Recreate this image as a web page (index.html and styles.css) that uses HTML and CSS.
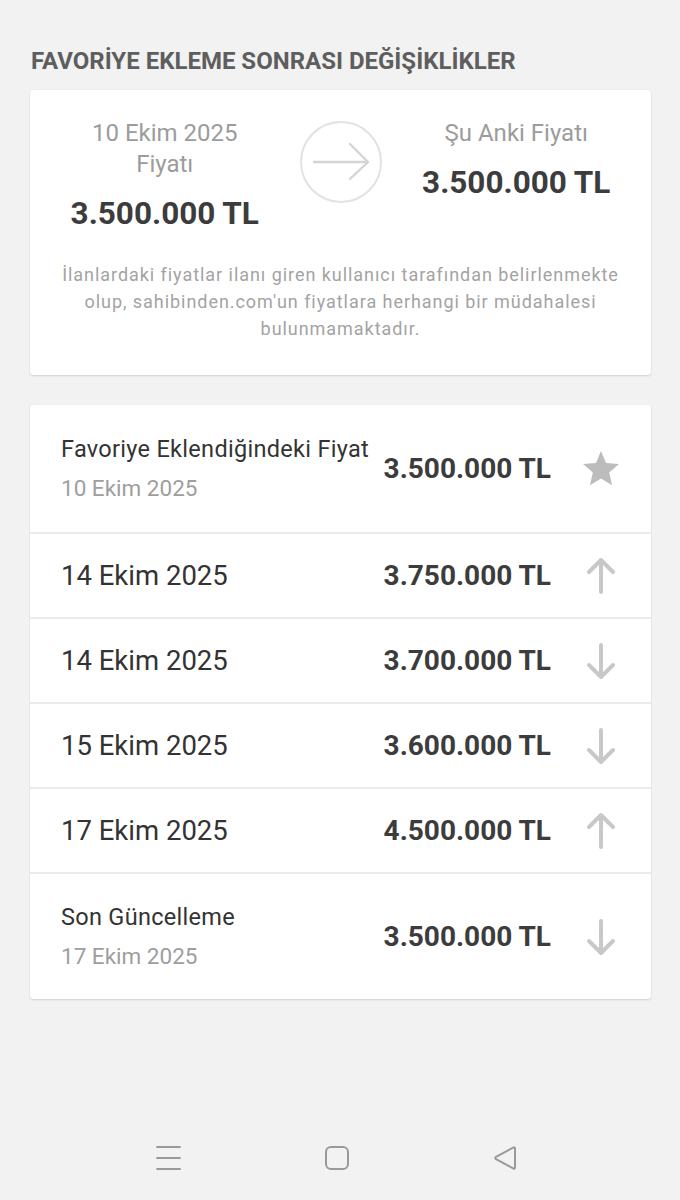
FILE: index.html
```html
<!DOCTYPE html>
<html lang="tr">
<head>
<meta charset="utf-8">
<title>Favoriye Ekleme Sonrası Değişiklikler</title>
<link rel="stylesheet" href="styles.css">
</head>
<body>
<main class="page">
  <h1 class="title">FAVORİYE EKLEME SONRASI DEĞİŞİKLİKLER</h1>

  <section class="card summary">
    <div class="compare">
      <div class="col">
        <div class="col-label">10 Ekim 2025<br>Fiyatı</div>
        <div class="big-price">3.500.000 TL</div>
      </div>
      <div class="circle">
        <svg width="82" height="82" viewBox="0 0 82 82">
          <circle cx="41" cy="41" r="40" fill="none" stroke="#e2e2e2" stroke-width="2"/>
          <path d="M14 41H68M50 23L68 41L50 58" fill="none" stroke="#d4d4d4" stroke-width="2.4" stroke-linecap="round" stroke-linejoin="round"/>
        </svg>
      </div>
      <div class="col">
        <div class="col-label">Şu Anki Fiyatı</div>
        <div class="big-price">3.500.000 TL</div>
      </div>
    </div>
    <p class="disclaimer">İlanlardaki fiyatlar ilanı giren kullanıcı tarafından belirlenmekte olup, sahibinden.com'un fiyatlara herhangi bir müdahalesi bulunmamaktadır.</p>
  </section>

  <section class="card history">
    <div class="row tall">
      <div class="row-text">
        <div class="row-label">Favoriye Eklendiğindeki Fiyat</div>
        <div class="row-date">10 Ekim 2025</div>
      </div>
      <div class="row-price">3.500.000 TL</div>
      <div class="row-icon">
        <svg width="36" height="36" viewBox="2 2 20 20"><path d="M12 17.27L18.18 21l-1.64-7.03L22 9.24l-7.19-.61L12 2 9.19 8.63 2 9.24l5.46 4.73L5.82 21z" fill="#bcbcbc"/></svg>
      </div>
    </div>
    <div class="row">
      <div class="row-text"><div class="row-main">14 Ekim 2025</div></div>
      <div class="row-price">3.750.000 TL</div>
      <div class="row-icon">
        <svg width="36" height="40" viewBox="0 0 36 40"><path d="M18 36V4M6 16L18 4L30 16" fill="none" stroke="#c8c8c8" stroke-width="4" stroke-linecap="round" stroke-linejoin="round"/></svg>
      </div>
    </div>
    <div class="row">
      <div class="row-text"><div class="row-main">14 Ekim 2025</div></div>
      <div class="row-price">3.700.000 TL</div>
      <div class="row-icon">
        <svg width="36" height="40" viewBox="0 0 36 40"><path d="M18 4V36M6 24L18 36L30 24" fill="none" stroke="#c8c8c8" stroke-width="4" stroke-linecap="round" stroke-linejoin="round"/></svg>
      </div>
    </div>
    <div class="row">
      <div class="row-text"><div class="row-main">15 Ekim 2025</div></div>
      <div class="row-price">3.600.000 TL</div>
      <div class="row-icon">
        <svg width="36" height="40" viewBox="0 0 36 40"><path d="M18 4V36M6 24L18 36L30 24" fill="none" stroke="#c8c8c8" stroke-width="4" stroke-linecap="round" stroke-linejoin="round"/></svg>
      </div>
    </div>
    <div class="row">
      <div class="row-text"><div class="row-main">17 Ekim 2025</div></div>
      <div class="row-price">4.500.000 TL</div>
      <div class="row-icon">
        <svg width="36" height="40" viewBox="0 0 36 40"><path d="M18 36V4M6 16L18 4L30 16" fill="none" stroke="#c8c8c8" stroke-width="4" stroke-linecap="round" stroke-linejoin="round"/></svg>
      </div>
    </div>
    <div class="row tall">
      <div class="row-text">
        <div class="row-label">Son Güncelleme</div>
        <div class="row-date">17 Ekim 2025</div>
      </div>
      <div class="row-price">3.500.000 TL</div>
      <div class="row-icon">
        <svg width="36" height="40" viewBox="0 0 36 40"><path d="M18 4V36M6 24L18 36L30 24" fill="none" stroke="#c8c8c8" stroke-width="4" stroke-linecap="round" stroke-linejoin="round"/></svg>
      </div>
    </div>
  </section>
</main>

<nav class="navbar">
  <div class="nav-btn">
    <svg width="26" height="26" viewBox="0 0 26 26"><path d="M2 2H25M2 13H25M2 24H25" stroke="#9a9a9a" stroke-width="1.8" stroke-linecap="round"/></svg>
  </div>
  <div class="nav-btn">
    <svg width="26" height="26" viewBox="0 0 26 26"><rect x="2" y="2" width="22" height="22" rx="5" fill="none" stroke="#9a9a9a" stroke-width="2"/></svg>
  </div>
  <div class="nav-btn">
    <svg width="26" height="26" viewBox="0 0 26 26"><path d="M23 3.5V22.5Q23 24.5 21.2 23.4L4 14.2Q2.4 13 4 11.8L21.2 2.6Q23 1.5 23 3.5Z" fill="none" stroke="#9a9a9a" stroke-width="2" stroke-linejoin="round"/></svg>
  </div>
</nav>
</body>
</html>
```

FILE: styles.css
```css
* { box-sizing: border-box; }

html, body {
  margin: 0;
  padding: 0;
}

body {
  background: #f2f2f2;
  font-family: Roboto, "Noto Sans", "Liberation Sans", sans-serif;
  color: #333;
  min-height: 1200px;
  display: flex;
  flex-direction: column;
}

.page {
  padding: 47px 29px 0 30px;
}

.title {
  margin: 0 0 15px 1px;
  font-size: 24px;
  line-height: 28px;
  font-weight: 700;
  color: #5e5e5e;
  letter-spacing: 0;
}

.card {
  background: #fff;
  border-radius: 3px;
  box-shadow: 0 1px 2px rgba(0, 0, 0, 0.14), 0 0 1px rgba(0, 0, 0, 0.08);
}

.summary {
  padding: 28px 0 33px;
  margin-bottom: 30px;
}

.compare {
  display: grid;
  grid-template-columns: 1fr 82px 1fr;
  align-items: start;
}

.col {
  text-align: center;
}

.col-label {
  font-size: 24px;
  line-height: 31px;
  color: #9c9c9c;
}

.big-price {
  margin-top: 15px;
  font-size: 31.5px;
  line-height: 38px;
  font-weight: 700;
  color: #3c3c3c;
}

.circle {
  margin-top: 3px;
  height: 82px;
}

.circle svg { display: block; }

.disclaimer {
  margin: 28px 30px 0;
  text-align: center;
  font-size: 18px;
  line-height: 27px;
  color: #a3a3a3;
  letter-spacing: 0.95px;
}

.history {
  overflow: hidden;
}

.row {
  display: flex;
  align-items: center;
  height: 85px;
  padding: 0 32px 0 31px;
  border-top: 2px solid #ebebeb;
}

.row:first-child { border-top: none; }

.row.tall { height: 127px; }

.row-text {
  flex: 1;
}

.row-label {
  font-size: 23.5px;
  line-height: 30px;
  letter-spacing: 0.3px;
  color: #333;
}

.row-date {
  margin-top: 9px;
  font-size: 22.5px;
  line-height: 30px;
  color: #9e9e9e;
}

.row-main {
  font-size: 27.5px;
  line-height: 34px;
  color: #333;
}

.row-price {
  font-size: 28px;
  line-height: 34px;
  font-weight: 700;
  color: #3c3c3c;
  margin-right: 32px;
}

.row-icon {
  width: 36px;
  display: flex;
  justify-content: center;
}

.row-icon svg { display: block; }

.navbar {
  margin-top: auto;
  height: 84px;
  padding-left: 84px;
  display: grid;
  grid-template-columns: repeat(3, 168.5px);
  align-items: center;
}

.nav-btn {
  display: flex;
  justify-content: center;
  align-items: center;
}

.nav-btn svg { display: block; }
```
